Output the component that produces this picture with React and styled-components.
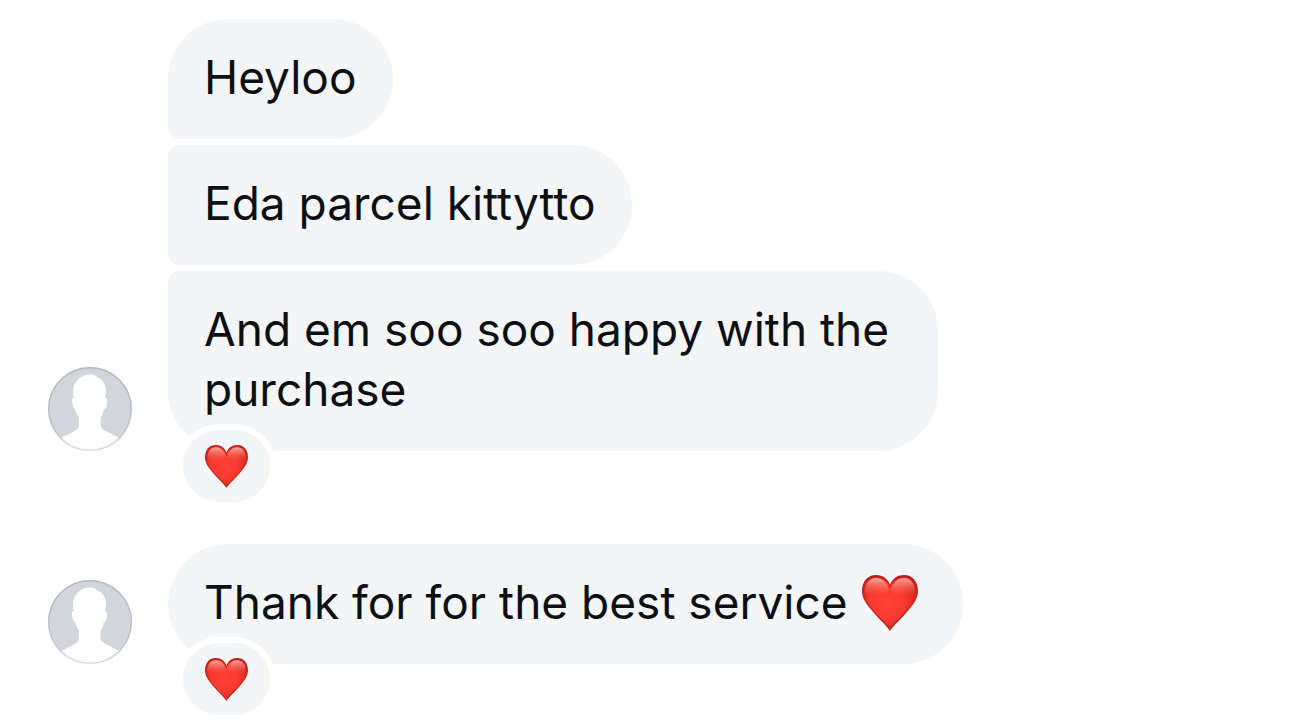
import React, { useId } from "react";
import styled, { createGlobalStyle, css } from "styled-components";

const GlobalStyle = createGlobalStyle`
  * {
    box-sizing: border-box;
  }

  body {
    margin: 0;
    background: #ffffff;
    color: #0c1014;
    font-family: Inter, "Liberation Sans", sans-serif;
    -webkit-font-smoothing: antialiased;
  }
`;

const Thread = styled.main`
  display: flex;
  flex-direction: column;
  gap: 42px;
  padding: 19px 48px 5px;
`;

const MessageGroup = styled.section`
  display: flex;
  flex-direction: column;
  gap: 6px;
`;

const MessageRow = styled.article`
  display: grid;
  grid-template-columns: 84px minmax(0, 1fr);
  column-gap: 36px;
  align-items: end;
`;

const AvatarArt = styled.svg`
  display: block;
  width: 84px;
  height: 84px;
`;

const Bubble = styled.p`
  grid-column: 2;
  justify-self: start;
  margin: 0;
  padding: 28px 36px 32px;
  max-width: 100%;
  border-radius: 60px;
  background: #f3f5f7;
  font-size: 46px;
  line-height: 60px;
  white-space: break-spaces;

  ${({ $joinsAbove }) =>
    $joinsAbove &&
    css`
      border-top-left-radius: 12px;
    `}

  ${({ $joinsBelow }) =>
    $joinsBelow &&
    css`
      border-bottom-left-radius: 12px;
    `}
`;

const Reaction = styled.button`
  grid-column: 2;
  justify-self: start;
  position: relative;
  display: flex;
  align-items: center;
  justify-content: center;
  width: 99px;
  height: 84px;
  margin: -27px 0 -6px 9px;
  padding: 0;
  border: 6px solid #ffffff;
  border-radius: 42px;
  background: #f3f5f7;
`;

const HeartArt = styled.svg`
  width: ${({ $size }) => $size}px;
  height: ${({ $size }) => $size}px;
`;

const InlineHeart = styled.span`
  display: inline-flex;
  margin: -8px 9px -8px 1px;
  vertical-align: -12px;
  line-height: 0;
`;

function Heart({ size }) {
  const id = useId();
  const outline =
    "M28 56C26 52 19 46 12 38C5 30 0 24 0 16C0 6 6 0 14 0C21 0 26 4 28 10C30 4 35 0 42 0C50 0 56 6 56 16C56 24 51 30 44 38C37 46 30 52 28 56Z";
  return (
    <HeartArt $size={size} viewBox="0 0 56 56" role="img" aria-label="Red heart">
      <defs>
        <radialGradient id={`${id}body`} cx="0.45" cy="0.48" r="0.6">
          <stop offset="0" stopColor="#ff4136" />
          <stop offset="0.55" stopColor="#f93a30" />
          <stop offset="1" stopColor="#cf241d" />
        </radialGradient>
        <linearGradient id={`${id}shine`} x1="0" y1="0" x2="0" y2="1">
          <stop offset="0" stopColor="#ffb5ad" stopOpacity="0.9" />
          <stop offset="0.4" stopColor="#ff8b80" stopOpacity="0.6" />
          <stop offset="1" stopColor="#ff5a4c" stopOpacity="0" />
        </linearGradient>
        <linearGradient id={`${id}rim`} x1="0" y1="0" x2="0" y2="1">
          <stop offset="0" stopColor="#b81f1a" />
          <stop offset="0.5" stopColor="#cc2720" />
          <stop offset="1" stopColor="#a3261b" />
        </linearGradient>
      </defs>
      <path d={outline} fill={`url(#${id}rim)`} />
      <path
        d="M28 54C25 49 19 44 13 37C6 29 2 23 2 16C2 7 7 2 14 2C21 2 26 6 28 13C30 6 35 2 42 2C49 2 54 7 54 16C54 23 50 29 43 37C37 44 31 49 28 54Z"
        fill={`url(#${id}body)`}
      />
      <path
        d="M3 17C3 8 8 3 14 3C20 3 25 7 27 15C24 21 7 24 3 17Z"
        fill={`url(#${id}shine)`}
      />
      <path
        d="M53 17C53 8 48 3 42 3C36 3 31 7 29 15C32 21 49 24 53 17Z"
        fill={`url(#${id}shine)`}
      />
    </HeartArt>
  );
}

function Avatar() {
  const id = useId();
  return (
    <AvatarArt viewBox="0 0 84 84" role="img" aria-label="Profile picture">
      <defs>
        <clipPath id={id}>
          <circle cx="42" cy="42" r="42" />
        </clipPath>
        <linearGradient id={`${id}ring`} x1="0" y1="0" x2="0" y2="1">
          <stop offset="0" stopColor="#b4b9c1" />
          <stop offset="0.7" stopColor="#bdc1c8" />
          <stop offset="1" stopColor="#d6d9dd" />
        </linearGradient>
      </defs>
      <g clipPath={`url(#${id})`}>
        <rect width="84" height="84" fill="#d2d6db" />
        <path
          d="M8 84V74C17 69 24 66 28 63C31 61 31 59 31 56V50C29 48 28 46 27.500 43C25 42 24 36 24 33C24 31 25 31 26 31C24 25 25 19 28 15C32 9 38 7 43 7.500C46 7.500 48 8.500 49 10.500C55 12 58 18 58 24C58 27 57 30 57 31C59 31 59.500 33 59 35C59 39 57.500 42 55.500 43C55 46 54 49 52.500 51V57C52.500 60 53 61 56 63C61 66 68 69 76 74V84Z"
          fill="#ffffff"
        />
      </g>
      <circle cx="42" cy="42" r="41.25" fill="none" stroke={`url(#${id}ring)`} strokeWidth="1.5" />
    </AvatarArt>
  );
}

function Message({ children, avatar, joinsAbove, joinsBelow, reaction }) {
  return (
    <MessageRow>
      {avatar && <Avatar />}
      <Bubble $joinsAbove={joinsAbove} $joinsBelow={joinsBelow}>
        {children}
      </Bubble>
      {reaction && (
        <Reaction type="button" aria-label="Heart reaction">
          <Heart size={43} />
        </Reaction>
      )}
    </MessageRow>
  );
}

export default function App() {
  return (
    <>
      <GlobalStyle />
      <Thread>
        <MessageGroup>
          <Message joinsBelow>Heyloo</Message>
          <Message joinsAbove joinsBelow>
            Eda parcel kittytto
          </Message>
          <Message avatar joinsAbove reaction>
            {"And em soo soo happy with the \npurchase"}
          </Message>
        </MessageGroup>
        <MessageGroup>
          <Message avatar reaction>
            Thank for for the best service{" "}
            <InlineHeart>
              <Heart size={56} />
            </InlineHeart>
          </Message>
        </MessageGroup>
      </Thread>
    </>
  );
}
